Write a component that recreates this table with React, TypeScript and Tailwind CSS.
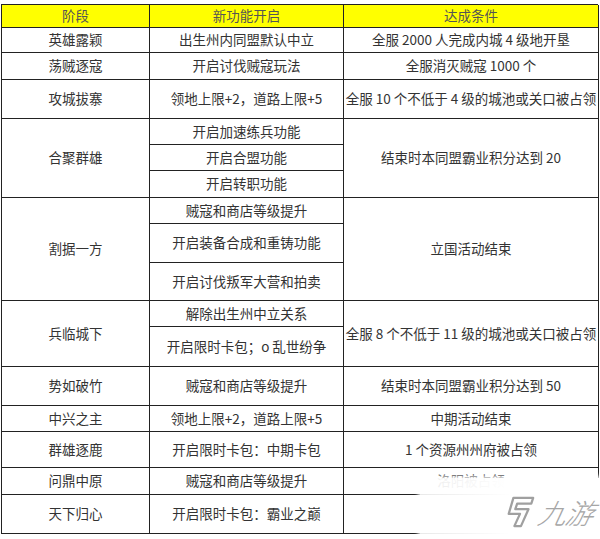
import React from 'react';

type Cell = {
  text: string;
  col: string;
  row: string;
  header?: boolean;
};

// row tracks: header, then each sub row of the table
const rowTracks =
  'grid-rows-[23px_25px_27px_39px_26px_26px_27px_26px_39px_38px_26px_40px_39px_26px_36px_27px_39px]';

const cells: Cell[] = [
  { text: '阶段', col: 'col-start-1', row: 'row-start-1', header: true },
  { text: '新功能开启', col: 'col-start-2', row: 'row-start-1', header: true },
  { text: '达成条件', col: 'col-start-3', row: 'row-start-1', header: true },

  { text: '英雄露颖', col: 'col-start-1', row: 'row-start-2' },
  { text: '出生州内同盟默认中立', col: 'col-start-2', row: 'row-start-2' },
  { text: '全服 2000 人完成内城 4 级地开垦', col: 'col-start-3', row: 'row-start-2' },

  { text: '荡贼逐寇', col: 'col-start-1', row: 'row-start-3' },
  { text: '开启讨伐贼寇玩法', col: 'col-start-2', row: 'row-start-3' },
  { text: '全服消灭贼寇 1000 个', col: 'col-start-3', row: 'row-start-3' },

  { text: '攻城拔寨', col: 'col-start-1', row: 'row-start-4' },
  { text: '领地上限+2，道路上限+5', col: 'col-start-2', row: 'row-start-4' },
  { text: '全服 10 个不低于 4 级的城池或关口被占领', col: 'col-start-3', row: 'row-start-4' },

  { text: '合聚群雄', col: 'col-start-1', row: 'row-start-5 row-span-3' },
  { text: '开启加速练兵功能', col: 'col-start-2', row: 'row-start-5' },
  { text: '开启合盟功能', col: 'col-start-2', row: 'row-start-6' },
  { text: '开启转职功能', col: 'col-start-2', row: 'row-start-7' },
  { text: '结束时本同盟霸业积分达到 20', col: 'col-start-3', row: 'row-start-5 row-span-3' },

  { text: '割据一方', col: 'col-start-1', row: 'row-start-8 row-span-3' },
  { text: '贼寇和商店等级提升', col: 'col-start-2', row: 'row-start-8' },
  { text: '开启装备合成和重铸功能', col: 'col-start-2', row: 'row-start-9' },
  { text: '开启讨伐叛军大营和拍卖', col: 'col-start-2', row: 'row-start-10' },
  { text: '立国活动结束', col: 'col-start-3', row: 'row-start-8 row-span-3' },

  { text: '兵临城下', col: 'col-start-1', row: 'row-start-11 row-span-2' },
  { text: '解除出生州中立关系', col: 'col-start-2', row: 'row-start-11' },
  { text: '开启限时卡包；o 乱世纷争', col: 'col-start-2', row: 'row-start-12' },
  { text: '全服 8 个不低于 11 级的城池或关口被占领', col: 'col-start-3', row: 'row-start-11 row-span-2' },

  { text: '势如破竹', col: 'col-start-1', row: 'row-start-13' },
  { text: '贼寇和商店等级提升', col: 'col-start-2', row: 'row-start-13' },
  { text: '结束时本同盟霸业积分达到 50', col: 'col-start-3', row: 'row-start-13' },

  { text: '中兴之主', col: 'col-start-1', row: 'row-start-14' },
  { text: '领地上限+2，道路上限+5', col: 'col-start-2', row: 'row-start-14' },
  { text: '中期活动结束', col: 'col-start-3', row: 'row-start-14' },

  { text: '群雄逐鹿', col: 'col-start-1', row: 'row-start-15' },
  { text: '开启限时卡包：中期卡包', col: 'col-start-2', row: 'row-start-15' },
  { text: '1 个资源州州府被占领', col: 'col-start-3', row: 'row-start-15' },

  { text: '问鼎中原', col: 'col-start-1', row: 'row-start-16' },
  { text: '贼寇和商店等级提升', col: 'col-start-2', row: 'row-start-16' },
  { text: '洛阳被占领', col: 'col-start-3', row: 'row-start-16' },

  { text: '天下归心', col: 'col-start-1', row: 'row-start-17' },
  { text: '开启限时卡包：霸业之巅', col: 'col-start-2', row: 'row-start-17' },
  { text: '', col: 'col-start-3', row: 'row-start-17' },
];

const Watermark = () => (
  <div className="absolute left-[420px] top-[478px] right-0 bottom-0 bg-gradient-to-r from-white/90 via-white to-white shadow-[0_0_4px_2px_rgba(255,255,255,0.9)] flex items-center justify-end gap-[3px] pr-[6px] pt-[6px]">
    <svg width="32" height="34" viewBox="0 0 34 36" fill="none" stroke="#a0a0a0" strokeWidth="2.4" strokeLinejoin="round">
      <path d="M10 3 H31 L29 9 H14 L12 15 H26 L18 33 H11 L17 20 H5 Z" />
    </svg>
    <span className="text-[28px] leading-none italic font-light tracking-tight text-[#a6a6a6] [font-family:'Noto_Sans_CJK_SC',sans-serif] -skew-x-12">
      九游
    </span>
  </div>
);

export default function App() {
  return (
    <div className="relative w-[600px] h-[539px] bg-white overflow-hidden [font-family:'Noto_Sans_CJK_SC','Noto_Sans',sans-serif]">
      <div className="pt-[4px] pl-[1px]">
        <div
          className={`grid grid-cols-[148px_194px_255px] ${rowTracks} w-[597px] border-l border-t border-[#222]`}
        >
          {cells.map((c, i) => (
            <div
              key={i}
              className={`${c.col} ${c.row} flex items-center justify-center border-r border-b border-[#222] text-[13.5px] leading-none whitespace-nowrap ${
                c.header ? 'bg-[#ffff00] text-[#555]' : 'bg-white text-[#333]'
              }`}
            >
              {c.text}
            </div>
          ))}
        </div>
      </div>
      <Watermark />
    </div>
  );
}
